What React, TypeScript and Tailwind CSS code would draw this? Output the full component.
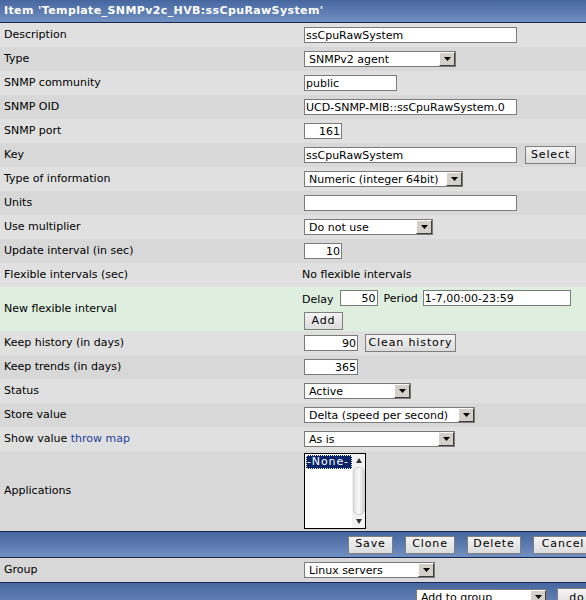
import React from "react";

const font = { fontFamily: '"DejaVu Sans", Verdana, sans-serif' };

function Row({
  label,
  tone,
  h = "h-[24px]",
  children,
}: {
  label: React.ReactNode;
  tone: "l" | "d" | "g";
  h?: string;
  children?: React.ReactNode;
}) {
  const bg = tone === "l" ? "bg-[#e0e0e0]" : tone === "d" ? "bg-[#d8d8d8]" : "bg-[#deeedf]";
  return (
    <div className={`flex items-center ${h} ${bg}`}>
      <div className="w-[300px] shrink-0 pl-[4px] text-[11px] text-black">{label}</div>
      <div className="flex flex-1 items-center pl-[4px] text-[11px] text-black">{children}</div>
    </div>
  );
}

function Input({ w, value = "", right = false }: { w: string; value?: string; right?: boolean }) {
  return (
    <div
      className={`${w} flex h-[16px] shrink-0 items-center border border-[#7a7a7a] bg-white px-[1px] text-[11px] leading-none text-black ${
        right ? "justify-end" : ""
      }`}
    >
      {value}
    </div>
  );
}

function Select({ w, value }: { w: string; value: string }) {
  return (
    <div className={`${w} flex h-[16px] shrink-0 items-stretch border border-[#7a7a7a] bg-white text-[11px] leading-none text-black`}>
      <div className="flex flex-1 items-center overflow-hidden whitespace-nowrap pl-[4px]">{value}</div>
      <div className="flex w-[16px] items-center justify-center border-t border-l border-t-white border-l-white border-r border-b border-r-[#404040] border-b-[#404040] bg-[#d4d0c8]">
        <svg width="7" height="4" viewBox="0 0 7 4">
          <path d="M0 0h7L3.5 4z" fill="#000" />
        </svg>
      </div>
    </div>
  );
}

function Btn({ w, children, h = "h-[18px]" }: { w: string; children: React.ReactNode; h?: string }) {
  return (
    <div
      className={`${w} ${h} flex shrink-0 items-center justify-center border border-[#7f7f7f] bg-gradient-to-b from-[#f4f4f4] to-[#dcdcdc] text-[11px] tracking-[0.08em] text-black`}
    >
      {children}
    </div>
  );
}

export default function App() {
  return (
    <div className="w-[586px] h-[600px] overflow-hidden bg-[#d8d8d8]" style={font}>
      {/* Header */}
      <div className="flex h-[23px] items-center border-b border-[#1c2650] bg-gradient-to-b from-[#46669f] to-[#7190c2] pl-[4px] text-[11px] font-bold tracking-[0.035em] text-white">
        Item 'Template_SNMPv2c_HVB:ssCpuRawSystem'
      </div>

      <Row label="Description" tone="l">
        <Input w="w-[213px]" value="ssCpuRawSystem" />
      </Row>
      <Row label="Type" tone="d">
        <Select w="w-[152px]" value="SNMPv2 agent" />
      </Row>
      <Row label="SNMP community" tone="l">
        <Input w="w-[93px]" value="public" />
      </Row>
      <Row label="SNMP OID" tone="d">
        <Input w="w-[213px]" value="UCD-SNMP-MIB::ssCpuRawSystem.0" />
      </Row>
      <Row label="SNMP port" tone="l">
        <Input w="w-[38px]" value="161" right />
      </Row>
      <Row label="Key" tone="d">
        <Input w="w-[213px]" value="ssCpuRawSystem" />
        <div className="ml-[8px]">
          <Btn w="w-[51px]">Select</Btn>
        </div>
      </Row>
      <Row label="Type of information" tone="l">
        <Select w="w-[159px]" value="Numeric (integer 64bit)" />
      </Row>
      <Row label="Units" tone="d">
        <Input w="w-[213px]" />
      </Row>
      <Row label="Use multiplier" tone="l">
        <Select w="w-[129px]" value="Do not use" />
      </Row>
      <Row label="Update interval (in sec)" tone="d">
        <Input w="w-[38px]" value="10" right />
      </Row>
      <Row label="Flexible intervals (sec)" tone="l">
        <span className="-ml-[2px]">No flexible intervals</span>
      </Row>
      <Row label="New flexible interval" tone="g" h="h-[44px]">
        <div className="flex flex-col gap-[4px] -ml-[2px]">
          <div className="flex items-center">
            <span className="mt-[4px]">Delay</span>
            <div className="ml-[6px]">
              <Input w="w-[38px]" value="50" right />
            </div>
            <span className="ml-[6px] mt-[2px]">Period</span>
            <div className="ml-[5px]">
              <Input w="w-[148px]" value="1-7,00:00-23:59" />
            </div>
          </div>
          <div className="pl-[2px]">
            <Btn w="w-[39px]">Add</Btn>
          </div>
        </div>
      </Row>
      <Row label="Keep history (in days)" tone="l">
        <Input w="w-[54px]" value="90" right />
        <div className="ml-[7px]">
          <Btn w="w-[91px]">Clean history</Btn>
        </div>
      </Row>
      <Row label="Keep trends (in days)" tone="d">
        <Input w="w-[54px]" value="365" right />
      </Row>
      <Row label="Status" tone="l">
        <Select w="w-[107px]" value="Active" />
      </Row>
      <Row label="Store value" tone="d">
        <Select w="w-[171px]" value="Delta (speed per second)" />
      </Row>
      <Row
        label={
          <span>
            Show value <span className="text-[#1f3f99]">throw map</span>
          </span>
        }
        tone="l"
      >
        <Select w="w-[151px]" value="As is" />
      </Row>
      <Row label="Applications" tone="d" h="h-[80px]">
        <div className="flex h-[76px] w-[62px] border border-black bg-white">
          <div className="flex-1 pt-[1px] pl-[1px]">
            <div className="w-[46px] border border-dotted border-white bg-[#0a246a] text-[11px] leading-[12px] tracking-[0.08em] text-white">
              -None-
            </div>
          </div>
          <div className="flex w-[14px] flex-col items-center bg-[#f2f2f2]">
            <svg width="8" height="8" viewBox="0 0 8 8" className="mt-[3px]">
              <path d="M4 1L7 6H1z" fill="#333" />
            </svg>
            <div className="mt-[2px] w-[12px] flex-1 rounded-[5px] bg-gradient-to-r from-[#e2e2e2] via-[#fafafa] to-[#cfcfcf] border border-[#d0d0d0]" />
            <svg width="8" height="8" viewBox="0 0 8 8" className="mb-[3px] mt-[2px]">
              <path d="M1 2h6L4 7z" fill="#333" />
            </svg>
          </div>
        </div>
      </Row>

      {/* Action bar */}
      <div className="flex h-[27px] items-center border-y border-[#1c2650] bg-gradient-to-b from-[#46669f] to-[#7190c2] pl-[348px] gap-[12px]">
        <Btn w="w-[45px]">Save</Btn>
        <Btn w="w-[50px]">Clone</Btn>
        <Btn w="w-[54px]">Delete</Btn>
        <Btn w="w-[60px]">Cancel</Btn>
      </div>

      <Row label="Group" tone="d">
        <Select w="w-[131px]" value="Linux servers" />
      </Row>

      <div className="flex h-[30px] items-start border-t border-[#1c2650] bg-gradient-to-b from-[#46669f] to-[#7190c2] pl-[416px] pt-[5px]">
        <div className="mt-[1px]">
          <Select w="w-[131px]" value="Add to group" />
        </div>
        <div className="ml-[10px]">
          <Btn w="w-[40px]" h="h-[20px]">do</Btn>
        </div>
      </div>
    </div>
  );
}
